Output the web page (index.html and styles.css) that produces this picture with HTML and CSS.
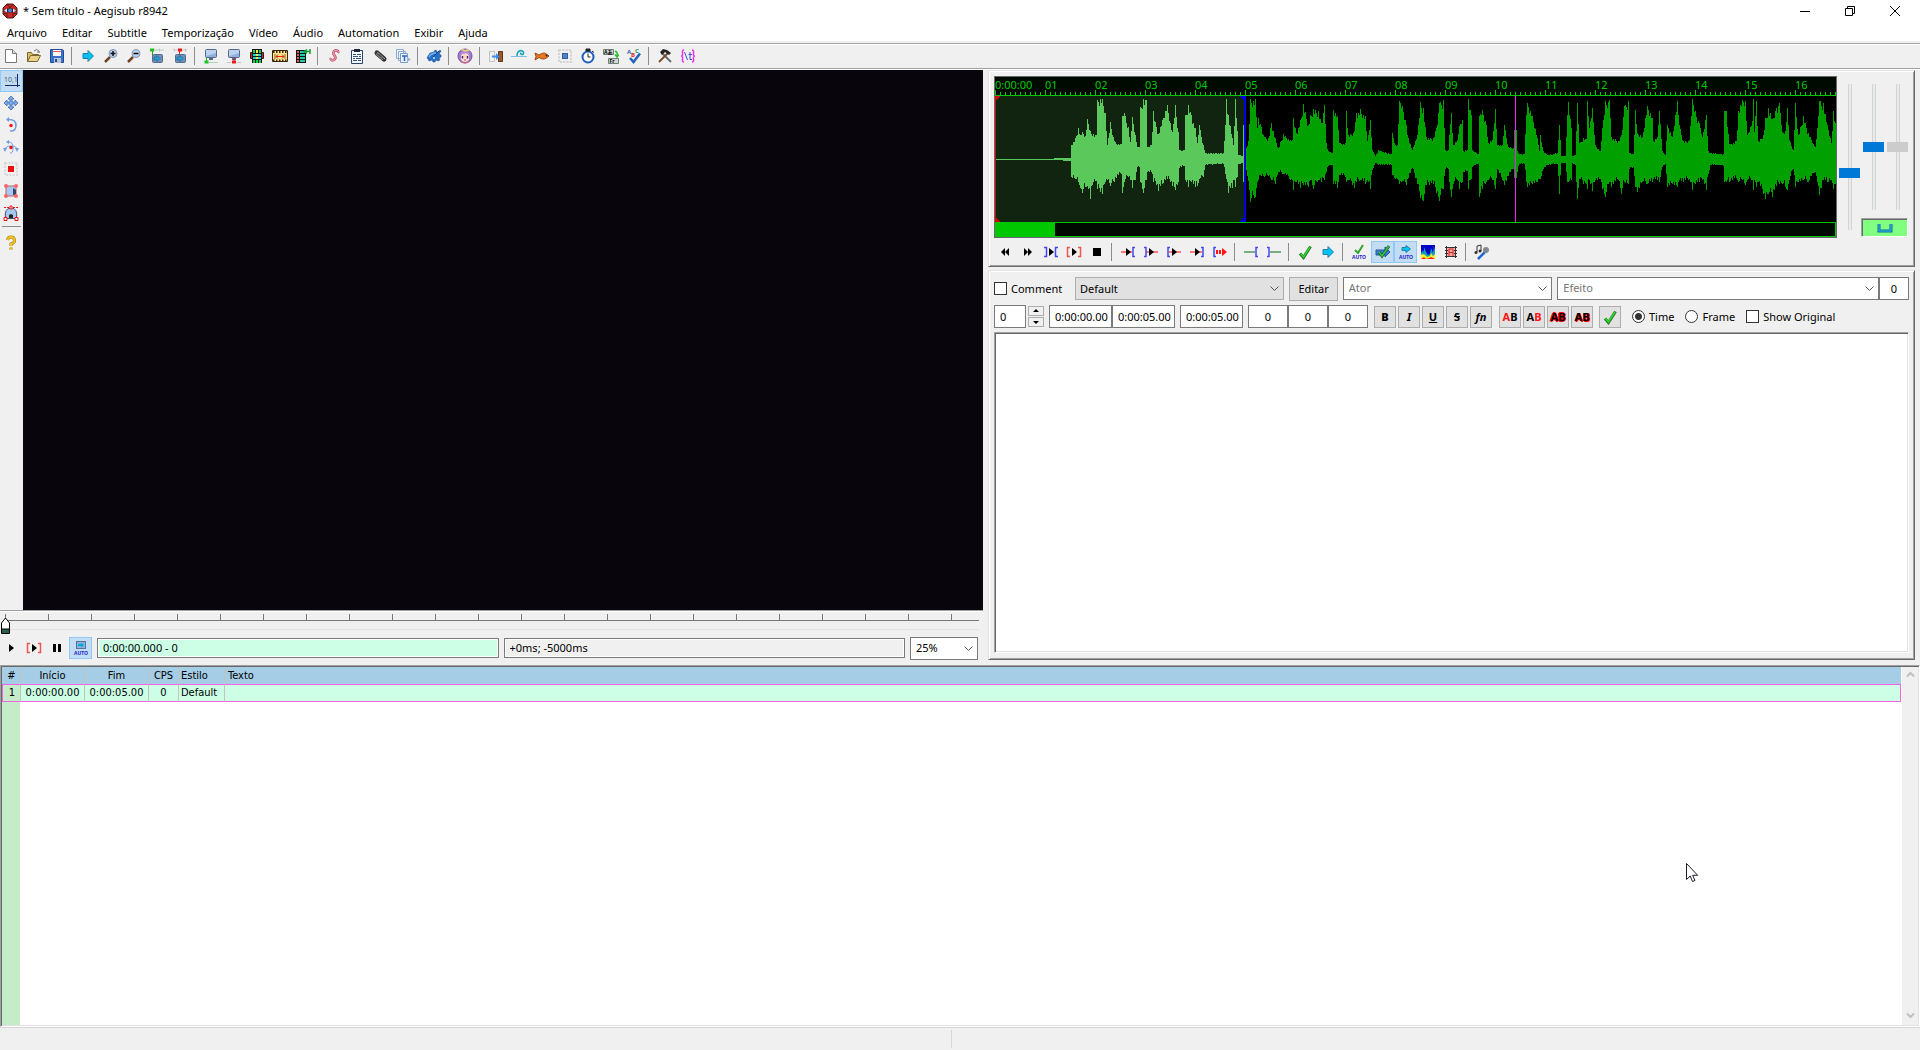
FILE: index.html
```html
<!DOCTYPE html>
<html lang="pt-BR">
<head>
    <meta charset="UTF-8">
    <title>* Sem título - Aegisub r8942</title>
    <link rel="stylesheet" href="styles.css">
</head>
<body>
    <!-- shapes that more than one button uses -->
    <svg class="defs" aria-hidden="true">
        <symbol id="arrow" viewBox="0 0 16 16"><path d="M3 5.500h5V2.500L13.500 8 8 13.500v-3H3z" fill="#00c3f5" stroke="#2b7fa5"/></symbol>
        <symbol id="check" viewBox="0 0 16 16"><path d="M3 9.500l3.500 4L13.500 2.500" fill="none" stroke="#1f7a1f" stroke-width="3"/><path d="M3.500 9.500l3 3.500L13 3" fill="none" stroke="#33d333" stroke-width="1.500"/></symbol>
        <symbol id="screen" viewBox="0 0 16 16"><rect x="2.500" y="1.500" width="11" height="8" rx="1" fill="#8fb1de" stroke="#56698a"/><path d="M3 2h10v3L3 8z" fill="#bdd2ee"/><path d="M6 10h4v2H6z" fill="#56698a"/></symbol>
        <symbol id="play" viewBox="0 0 16 16"><path d="M6 4l5 4-5 4z" fill="#000"/></symbol>
    </svg>

    <header class="titlebar">
        <svg class="logo" viewBox="0 0 16 16"><path d="M5 1h6l4 4v6l-4 4H5l-4-4V5z" fill="#c92a25" stroke="#4b1515"/><path d="M5 1l3 4 3-4M1 11l4-1v5M15 11l-4-1v5" fill="none" stroke="#641b1b"/><path d="M1 7.500Q8 3 15 7.500 8 12 1 7.500" fill="#20243d"/><path d="M2 7.500l3-2v4zM14 7.500l-3-2v4z" fill="#d9e4f2"/><circle cx="8" cy="7.500" r="2" fill="#5582c6"/></svg>
        <h1>* Sem título - Aegisub r8942</h1>
        <div class="window-buttons">
            <button type="button" aria-label="Minimizar"><svg viewBox="0 0 12 12"><path d="M1 6.500h10" stroke="#000"/></svg></button>
            <button type="button" aria-label="Restaurar"><svg viewBox="0 0 12 12"><path d="M1.500 3.500h7v7h-7zM3.500 3.500v-2h7v7h-2" fill="none" stroke="#000"/></svg></button>
            <button type="button" aria-label="Fechar"><svg viewBox="0 0 12 12"><path d="M1 1l10 10M11 1L1 11" stroke="#000"/></svg></button>
        </div>
    </header>

    <nav class="menubar">
        <a href="#">Arquivo</a>
        <a href="#">Editar</a>
        <a href="#">Subtitle</a>
        <a href="#">Temporização</a>
        <a href="#">Vídeo</a>
        <a href="#">Áudio</a>
        <a href="#">Automation</a>
        <a href="#">Exibir</a>
        <a href="#">Ajuda</a>
    </nav>

    <div class="toolbar main-toolbar">
        <button type="button" aria-label="Novo"><svg viewBox="0 0 16 16"><path d="M2.500 1.500h7l4 4v9h-11z" fill="#fff" stroke="#777"/><path d="M9.500 1.500v4h4" fill="#ddd" stroke="#777"/></svg></button>
        <button type="button" aria-label="Abrir"><svg viewBox="0 0 16 16"><path d="M1.500 14V4.500h4l1 2h6V9" fill="#d9bd68" stroke="#7d662b"/><path d="M1.500 13.500l3-6h10l-3 6z" fill="#ead18a" stroke="#7d662b"/><path d="M8 3q3-3 5 0v1.500M11 4h3" fill="none" stroke="#777"/></svg></button>
        <button type="button" aria-label="Salvar"><svg viewBox="0 0 16 16"><path d="M1.500 1.500h12l1 1v12h-13z" fill="#3872c9" stroke="#204a91"/><path d="M4 2h8v6H4z" fill="#fff"/><path d="M4 3.500h8" stroke="#e55"/><path d="M5 10h7v5H5z" fill="#bcc8da"/><path d="M6 11h2v3H6z" fill="#204a91"/></svg></button>
        <span class="sep"></span>
        <button type="button" aria-label="Ir para"><svg><use href="#arrow"/></svg></button>
        <button type="button" aria-label="Ampliar"><svg viewBox="0 0 16 16"><path d="M2 14l5-5" stroke="#714321" stroke-width="2.500"/><circle cx="10" cy="5.500" r="4" fill="#b9d2ef" stroke="#8397af"/><path d="M7.500 5.500h5M10 3v5" stroke="#111" stroke-width="1.500"/></svg></button>
        <button type="button" aria-label="Reduzir"><svg viewBox="0 0 16 16"><path d="M2 14l5-5" stroke="#714321" stroke-width="2.500"/><circle cx="10" cy="5.500" r="4" fill="#b9d2ef" stroke="#8397af"/><path d="M7.500 5.500h5" stroke="#111" stroke-width="1.500"/></svg></button>
        <button type="button" aria-label="Vídeo ao início"><svg viewBox="0 0 16 16"><path d="M3 2h12M5 .5v3M10.500 .5v3" stroke="#bcd1bc"/><path d="M1 .5h4v3H1z" fill="#20c420"/><path d="M3.500 3v5" stroke="#20a820"/><rect x="3.500" y="6.500" width="10" height="8" rx="1" fill="#6f8fb5" stroke="#526d90"/><path d="M5 9h3V7.500l3 3-3 3V12H5z" fill="#16a4dd" stroke="#254f7b" stroke-width=".5"/></svg></button>
        <button type="button" aria-label="Vídeo ao fim"><svg viewBox="0 0 16 16"><path d="M2 2h13M2 .5v3M13.500 .5v3" stroke="#d3bcbc"/><path d="M6 .5h4v3H6z" fill="#e21e1e"/><path d="M7.500 3v5" stroke="#d22"/><rect x="3.500" y="6.500" width="10" height="8" rx="1" fill="#6f8fb5" stroke="#526d90"/><path d="M5 9h3V7.500l3 3-3 3V12H5z" fill="#16a4dd" stroke="#254f7b" stroke-width=".5"/></svg></button>
        <span class="sep"></span>
        <button type="button" aria-label="Início ao vídeo"><svg viewBox="0 0 16 16"><use href="#screen"/><path d="M3.500 10v5" stroke="#20a820"/><path d="M1.500 12.500h4v3h-4z" fill="#20c420"/><path d="M6 14.500h9" stroke="#b4cfb4"/></svg></button>
        <button type="button" aria-label="Fim ao vídeo"><svg viewBox="0 0 16 16"><use href="#screen"/><path d="M8 9v5" stroke="#d22"/><path d="M6 12.500h4v3H6z" fill="#e21e1e"/><path d="M1 14.500h4M11 14.500h4" stroke="#d8bcbc"/></svg></button>
        <button type="button" aria-label="Selecionar visíveis"><svg viewBox="0 0 16 16"><path d="M1.500 4.500h13v6h-13z" fill="#a03535" stroke="#561010"/><path d="M3 1h10v14H3z" fill="#161616"/><path d="M4 2h2v3H4zM7 2h2v3H7zM10 2h2v3h-2zM4 12h2v3H4zM7 12h2v3H7zM10 12h2v3h-2z" fill="#19cf4e"/><path d="M4 6h8v2H4zM4 9h8v2H4z" fill="#1bdada"/><path d="M7 2h2v3H7zM7 6h2v2H7zM7 9h2v2H7z" fill="#ffe044"/></svg></button>
        <button type="button" aria-label="Ajustar à cena"><svg viewBox="0 0 16 16"><path d="M.5 2.500h15v11H.5z" fill="#ffe48e" stroke="#38270d"/><path d="M1 4h14M1 12.500h14" stroke="#38270d" stroke-width="2" stroke-dasharray="1.500 1.500"/><path d="M3 6v5M13 6v5" stroke="#8e641e"/><path d="M4 8.500h8M6 6.500l-2 2 2 2M10 6.500l2 2-2 2" fill="none" stroke="#df2a16"/></svg></button>
        <button type="button" aria-label="Deslocar"><svg viewBox="0 0 16 16"><path d="M1 2h10v13H1z" fill="#151515"/><path d="M2 3h2v2H2zM2 6h2v2H2zM2 9h2v2H2zM2 12h2v2H2z" fill="#e95353"/><path d="M5 3h5v2H5zM5 6h5v2H5zM5 9h5v2H5zM5 12h5v2H5z" fill="#19cdae"/><path d="M15 1v5M15 3.500h-5M12 1.500l-3 2 3 2" fill="none" stroke="#139c30" stroke-width="1.500"/></svg></button>
        <span class="sep"></span>
        <button type="button" aria-label="Gerenciador de estilos"><svg viewBox="0 0 16 16"><path d="M12 5q1-2.500-2-2.500T7.500 6c1 2 3 3 1.500 5s-5 1.500-4-1" fill="none" stroke="#a33d56" stroke-width="2.500"/><path d="M12 5q1-2.500-2-2.500T7.500 6c1 2 3 3 1.500 5s-5 1.500-4-1" fill="none" stroke="#f08fa6" stroke-width="1.500"/></svg></button>
        <button type="button" aria-label="Propriedades"><svg viewBox="0 0 16 16"><path d="M2.500 2.500h11v13h-11z" fill="#f4f8ff" stroke="#2c426c"/><path d="M5 1h6v3H5z" fill="#1f2635"/><path d="M4 6.500h3M8 6.500h4M4 8.500h5M10 8.500h2M4 10.500h2M7 10.500h5M4 12.500h4M9 12.500h3" stroke="#34517f"/></svg></button>
        <button type="button" aria-label="Anexos"><svg viewBox="0 0 16 16"><path d="M5 5l7 6" stroke="#333" stroke-width="5" stroke-linecap="round"/><path d="M5 4l8 7M4 6l7 6" stroke="#aaa"/><path d="M5 5l6 6" stroke="#666" stroke-dasharray="1 1" stroke-width="3"/></svg></button>
        <button type="button" aria-label="Fontes"><svg viewBox="0 0 16 16"><path d="M1.500 1.500h7v9h-7zM3.500 3.500h7v9h-7z" fill="#eaf3ff" stroke="#8fa9cb"/><path d="M5.500 5.500h7v9h-7z" fill="#eaf3ff" stroke="#7a9bc8"/><path d="M7 8h5M9.500 8v5" stroke="#2c65bd" stroke-width="1.500"/><path d="M12 9l4 2.500-4 2.500z" fill="#9ab3cf"/></svg></button>
        <span class="sep"></span>
        <button type="button" aria-label="Automação"><svg viewBox="0 0 16 16"><path d="M8 4l1-2 2 1v2l3-3 1 1-2 3 2 1v2l-2 1 1 2-2 1-2-1-1 2H7l-1-2-3 1-1-2-1-1 1-2 2-3z" fill="#2670c9" stroke="#163f7a" stroke-width=".5"/><path d="M3 9q2-4 7-4" stroke="#75b2f3" stroke-width="1.500" fill="none"/><path d="M7 9l6-6" stroke="#163f7a"/><circle cx="8" cy="10" r="1" fill="#cfe3fa"/></svg></button>
        <span class="sep"></span>
        <button type="button" aria-label="Assistente"><svg viewBox="0 0 16 16"><circle cx="8" cy="8" r="7" fill="#a67bd6" stroke="#74519f"/><path d="M4 7q4-4 8 0v5q-4 4-8 0z" fill="#fbdccb"/><path d="M4 8l2-4 1 3 2-4 3 5V5Q8 1 4 5z" fill="#b793e2"/><path d="M5.500 8v2.500M10.500 8v2.500" stroke="#4a2d6c" stroke-width="1.500"/><path d="M3 2l3-1 2 1 3-1 2 2-5 .5z" fill="#f0ce74"/><path d="M7 12h2" stroke="#c14a4a"/><path d="M4 14q4 2 8 0" stroke="#e06284" fill="none"/></svg></button>
        <span class="sep"></span>
        <button type="button" aria-label="Deslocar tempos"><svg viewBox="0 0 16 16"><path d="M1.500 3.500h5v10h-5z" fill="none" stroke="#999" stroke-dasharray="1 1"/><path d="M10.500 3.500h4v10h-4z" fill="#9a5a2c" stroke="#5f3417"/><path d="M4 7.500h4V5l3.500 3.500L8 12V9.500H4z" fill="#3d8df0"/></svg></button>
        <button type="button" aria-label="Pós-processador"><svg viewBox="0 0 16 16"><path d="M0 8.500h16" stroke="#7cc0e8" fill="none"/><path d="M6 8q0-5 4-5.500 4 1 2 4-3 .5-2-2" fill="none" stroke="#12a3b5" stroke-width="1.500"/></svg></button>
        <button type="button" aria-label="Kanji"><svg viewBox="0 0 16 16"><path d="M1 5l4 2q5-4 10 1-5 5-10 1.500L1 12l1-3.500z" fill="#e77a23" stroke="#97480f"/><path d="M8 6l2-2 2 2M8 10l2 2 1-2" fill="#d2601a"/><circle cx="12.500" cy="7.500" r="1" fill="#222"/></svg></button>
        <button type="button" aria-label="Resolução"><svg viewBox="0 0 16 16"><rect x="2" y="2" width="12" height="12" fill="none" stroke="#d2d2d2" stroke-width="2" stroke-dasharray="2 1.300"/><rect x="5.500" y="5.500" width="5" height="5" fill="#4e81d0" stroke="#305ca3"/></svg></button>
        <button type="button" aria-label="Karaoke"><svg viewBox="0 0 16 16"><circle cx="8" cy="9" r="5.500" fill="#fff" stroke="#1e60bb" stroke-width="2"/><path d="M6 1h4v2H6zM12 3l2 1.500" fill="#222" stroke="#222"/><path d="M8 5.500V9h2.500" fill="none" stroke="#222"/></svg></button>
        <button type="button" aria-label="Traduzir"><svg viewBox="0 0 16 16"><path d="M.5 1.500h10v5H.5zM5.500 10.500h10v5h-10z" fill="#cfd8d2" stroke="#708078"/><text x="1" y="6" class="tiny-dark">Aあ</text><text x="6.500" y="15" class="tiny-dark">Fr</text><path d="M12 3q3 1 2 5M12 6.500l2 2.500 2-2.500" fill="none" stroke="#2fbf2f" stroke-width="1.500"/></svg></button>
        <button type="button" aria-label="Ortografia"><svg viewBox="0 0 16 16"><text x="1" y="6" class="letter blue">A</text><text x="5" y="9" class="letter red">B</text><text x="9" y="5" class="letter green">C</text><path d="M4 10l3.500 4L14 5.500" fill="none" stroke="#2464bb" stroke-width="2.500"/></svg></button>
        <span class="sep"></span>
        <button type="button" aria-label="Opções"><svg viewBox="0 0 16 16"><path d="M5 5l9 9" stroke="#6b6b6b" stroke-width="2"/><path d="M2 14L12 4" stroke="#7c4c28" stroke-width="2"/><path d="M3 4l3-3 4 1 4 3-2 2-4-3-3 3z" fill="#252525"/></svg></button>
        <button type="button" aria-label="Tags"><svg viewBox="0 0 16 16"><path d="M4 2Q2 2 2.500 5T1 8q2 0 1.500 3T4 14M12 2q2 0 1.500 3T15 8q-2 0-1.500 3T12 14" fill="none" stroke="#f22ef2" stroke-width="1.500"/><path d="M4.500 4l3 8" stroke="#444ada"/><path d="M10 4v7.500h2M8.500 6.500H12" fill="none" stroke="#444ada"/></svg></button>
    </div>

    <div class="workspace">
        <section class="video-side">
            <div class="video-row">
                <div class="toolbar visual-toolbar">
                    <button type="button" class="active" aria-label="Padrão"><svg viewBox="0 0 16 16"><text x="0" y="9" class="coord">10,1</text><path d="M1 12.500h15M13.500 1v13" stroke="#132b6b"/></svg></button>
                    <button type="button" aria-label="Arrastar"><svg viewBox="0 0 16 16"><path d="M8 1l3 3H9v3h3V5l3 3-3 3V9H9v3h2l-3 3-3-3h2V9H4v2L1 8l3-3v2h3V4H5z" fill="#81aef0" stroke="#3c68b0" stroke-width=".8"/></svg></button>
                    <button type="button" aria-label="Girar Z"><svg viewBox="0 0 16 16"><path d="M6 2.500q7 0 7 6t-6 5.500" fill="none" stroke="#6f9be0" stroke-width="1.500"/><path d="M6 0v5L3 2.500z" fill="#6f9be0"/><circle cx="8" cy="8.500" r="1.700" fill="#e11"/></svg></button>
                    <button type="button" aria-label="Girar XY"><svg viewBox="0 0 16 16"><path d="M2 11q0-4 6-4t6 4M6 3q4 0 4 6t-3 5" fill="none" stroke="#6f9be0"/><path d="M6 1v4L3 3zM0 9h4l-2 4zM12 9h4l-2 4z" fill="#6f9be0"/><circle cx="8" cy="8.500" r="1.700" fill="#e11"/></svg></button>
                    <button type="button" aria-label="Escala"><svg viewBox="0 0 16 16"><rect x="2" y="2" width="12" height="12" fill="none" stroke="#d0d0d5" stroke-width="1.500" stroke-dasharray="2 1.300"/><path d="M5 5h6v6H5z" fill="#f00e0e"/></svg></button>
                    <button type="button" aria-label="Recorte"><svg viewBox="0 0 16 16"><path d="M3 3h10v10H3z" fill="#a8c8f3" stroke="#b56565"/><path d="M10 5l3 2v5h-3z" fill="#344667"/><g fill="#f66"><circle cx="3" cy="3" r="2"/><circle cx="13" cy="3" r="2"/><circle cx="3" cy="13" r="2"/><circle cx="13" cy="13" r="2"/></g></svg></button>
                    <button type="button" aria-label="Recorte vetorial"><svg viewBox="0 0 16 16"><path d="M2.500 13.500Q1 3 8 3t5.500 10.500z" fill="#a8c8f3" stroke="#46536c"/><path d="M1 2.500h14" stroke="#e11" stroke-dasharray="2 1"/><path d="M6 13v-3l2-1 2 1v3z" fill="#222"/><path d="M1 12.500h3v3H1zM12 12.500h3v3h-3zM7 1h2v3H7z" fill="#fff" stroke="#e11"/></svg></button>
                    <span class="sep"></span>
                    <button type="button" aria-label="Ajuda"><svg viewBox="0 0 16 16"><path d="M4.500 5Q5 2 8 2t3.500 3T8 9v2M8 12.500v2" fill="none" stroke="#9b7a18" stroke-width="3"/><path d="M4.500 5Q5 2 8 2t3.500 3T8 9v2M8 12.500v2" fill="none" stroke="#f6c51f" stroke-width="2"/></svg></button>
                </div>
                <div class="video"></div>
            </div>
            <div class="seek">
                <input type="range" class="seek-slider" min="0" max="100" value="0" aria-label="Posição do vídeo">
            </div>
            <div class="video-controls">
                <div class="toolbar">
                    <button type="button" aria-label="Reproduzir"><svg><use href="#play"/></svg></button>
                    <button type="button" aria-label="Reproduzir linha"><svg viewBox="0 0 16 16"><use href="#play"/><path d="M4 3.500H1.500v9H4M12 3.500h2.500v9H12" fill="none" stroke="#f45353" stroke-width="1.500"/></svg></button>
                    <button type="button" aria-label="Pausar"><svg viewBox="0 0 16 16"><path d="M4 4h3v8H4zM9 4h3v8H9z"/></svg></button>
                    <button type="button" class="active" aria-label="Rolagem automática"><svg viewBox="0 0 16 16"><rect x="3.500" y="1.500" width="9" height="7" fill="#8db1d9" stroke="#54749b"/><path d="M5 4h3V2.500L11 5 8 7.500V6H5z" fill="#00a9e0"/><text x="8" y="15" class="auto">AUTO</text></svg></button>
                </div>
                <input type="text" class="field position" value="0:00:00.000 - 0" readonly aria-label="Tempo do quadro">
                <input type="text" class="field offset" value="+0ms; -5000ms" readonly aria-label="Tempo relativo">
                <select class="zoom" aria-label="Zoom"><option>25%</option></select>
            </div>
        </section>

        <section class="edit-side">
            <div class="panel audio-panel">
                <div class="audio-row">
                    <div class="audio-display">
                        <div class="ruler">
                            <span>0:00:00</span><span>01</span><span>02</span><span>03</span><span>04</span><span>05</span><span>06</span><span>07</span><span>08</span><span>09</span><span>10</span><span>11</span><span>12</span><span>13</span><span>14</span><span>15</span><span>16</span>
                        </div>
                        <svg class="wave" shape-rendering="crispEdges">
                            <rect class="selection" width="250" height="126"/>
                            <path id="wave-selected" class="wave-selected"/>
                            <path id="wave-rest" class="wave-rest"/>
                            <path d="M0 0h5L1 4v118l4 4H0z" fill="#d80000"/>
                            <path d="M251 0h-7l5 5v116l-5 5h7z" fill="#0000e0"/>
                            <path d="M520 0h1v126h-1z" fill="#f020f0"/>
                        </svg>
                        <div class="audio-scroll"><div class="audio-scroll-thumb"></div></div>
                    </div>
                    <div class="audio-sliders">
                        <input type="range" class="vslider tall" value="38" aria-label="Zoom horizontal">
                        <div class="slider-group">
                            <div class="slider-pair">
                                <input type="range" class="vslider" value="50" aria-label="Zoom vertical">
                                <input type="range" class="vslider" value="50" disabled aria-label="Volume">
                            </div>
                            <button type="button" class="link-button" aria-label="Vincular"><svg viewBox="0 0 16 10"><path d="M2 1v7h12V1" fill="none" stroke="#1a66a0" stroke-width="3"/><path d="M2 1v7h12V1" fill="none" stroke="#16c8f0"/></svg></button>
                        </div>
                    </div>
                </div>
                <div class="toolbar audio-toolbar">
                    <button type="button" aria-label="Linha anterior"><svg viewBox="0 0 16 16"><path d="M8 4v8L4 8zM12 4v8L8 8z"/></svg></button>
                    <button type="button" aria-label="Próxima linha"><svg viewBox="0 0 16 16"><path d="M4 4v8l4-4zM8 4v8l4-4z"/></svg></button>
                    <button type="button" aria-label="Reproduzir seleção"><svg viewBox="0 0 16 16"><use href="#play"/><path d="M1 3.500h2.500v9H1M15 3.500h-2.500v9H15" fill="none" stroke="#4646f4" stroke-width="1.500"/></svg></button>
                    <button type="button" aria-label="Reproduzir linha"><svg viewBox="0 0 16 16"><use href="#play"/><path d="M4 3.500H1.500v9H4M12 3.500h2.500v9H12" fill="none" stroke="#f45353" stroke-width="1.500"/></svg></button>
                    <button type="button" aria-label="Parar"><svg viewBox="0 0 16 16"><path d="M4 4h8v8H4z"/></svg></button>
                    <span class="sep"></span>
                    <button type="button" aria-label="500 ms antes"><svg viewBox="0 0 16 16"><path d="M1 8h11" stroke="#f55" stroke-width="1.500"/><path d="M6 4l5 4-5 4z"/><path d="M15 3.500h-2v9h2" fill="none" stroke="#4646f4" stroke-width="1.500"/></svg></button>
                    <button type="button" aria-label="500 ms depois"><svg viewBox="0 0 16 16"><path d="M3 8h12" stroke="#f55" stroke-width="1.500"/><path d="M6 4l5 4-5 4z"/><path d="M1 3.500h2v9H1" fill="none" stroke="#4646f4" stroke-width="1.500"/></svg></button>
                    <button type="button" aria-label="Primeiros 500 ms"><svg viewBox="0 0 16 16"><path d="M3 8h12" stroke="#f55" stroke-width="1.500"/><path d="M6 4l5 4-5 4z"/><path d="M4 3.500H2v9h2" fill="none" stroke="#4646f4" stroke-width="1.500"/></svg></button>
                    <button type="button" aria-label="Últimos 500 ms"><svg viewBox="0 0 16 16"><path d="M1 8h12" stroke="#f55" stroke-width="1.500"/><path d="M6 4l5 4-5 4z"/><path d="M12 3.500h2v9h-2" fill="none" stroke="#4646f4" stroke-width="1.500"/></svg></button>
                    <button type="button" aria-label="Até o fim"><svg viewBox="0 0 16 16"><path d="M4 3.500H2v9h2" fill="none" stroke="#4646f4" stroke-width="1.500"/><path d="M4 8h8" stroke="#f11" stroke-width="4" stroke-dasharray="2 1"/><path d="M10 4l5 4-5 4z" fill="#f11"/></svg></button>
                    <span class="sep"></span>
                    <button type="button" aria-label="Entrada"><svg viewBox="0 0 16 16"><path d="M1 8h11" stroke="#4b9b5b" stroke-width="1.500"/><path d="M15 3.500h-2v9h2" fill="none" stroke="#4646f4" stroke-width="1.500"/></svg></button>
                    <button type="button" aria-label="Saída"><svg viewBox="0 0 16 16"><path d="M4 8h11" stroke="#4b9b5b" stroke-width="1.500"/><path d="M1 3.500h2v9H1" fill="none" stroke="#4646f4" stroke-width="1.500"/></svg></button>
                    <span class="sep"></span>
                    <button type="button" aria-label="Confirmar"><svg><use href="#check"/></svg></button>
                    <button type="button" aria-label="Ir à seleção"><svg><use href="#arrow"/></svg></button>
                    <span class="sep"></span>
                    <button type="button" aria-label="Confirmar automaticamente"><svg viewBox="0 0 16 16"><path d="M4 6l3 3 5-8" fill="none" stroke="#2fa52f" stroke-width="2"/><text x="8" y="15" class="auto">AUTO</text></svg></button>
                    <button type="button" class="active" aria-label="Avançar ao confirmar"><svg viewBox="0 0 16 16"><path d="M1 6h9V3l5 5-5 5v-2H1z" fill="#3b80d8" stroke="#25569a"/><path d="M4 8l3 4 7-10" fill="none" stroke="#155a25" stroke-width="3"/><path d="M4 8l3 4 7-10" fill="none" stroke="#36c84b" stroke-width="1.500"/></svg></button>
                    <button type="button" class="active" aria-label="Rolagem automática"><svg viewBox="0 0 16 16"><path d="M4 3.500h4v-2L12.500 5 8 8.500v-2H4z" fill="#00c3f5" stroke="#2b7fa5"/><text x="8" y="15" class="auto">AUTO</text></svg></button>
                    <button type="button" aria-label="Espectro"><svg viewBox="0 0 16 16"><path d="M1 1h14v14H1z" fill="#0000c8"/><path d="M1 15V9l2-3 1 3V3l2 5 2 3 2-1 1-6 2 5 1-7 1 5v8z" fill="#14a0b8"/><path d="M1 15v-4l2-1 2 1 2 2 3-1 1-3 2 3 2-2v5z" fill="#f2f21c"/><path d="M1 15l3-2 2 2 3-1 2-1 4 2z" fill="#f22"/></svg></button>
                    <button type="button" aria-label="Modo Medusa"><svg viewBox="0 0 16 16"><path d="M4 4h8v8H4z" fill="#f7a6a6"/><path d="M2 3.500h12M2 12.500h12M3.500 2v12M12.500 2v12M2 6.500h3M2 9.500h3M11 6.500h3M11 9.500h3" stroke="#333"/><path d="M6 12V5h4v7M6 8.500h4" fill="none" stroke="#d22"/></svg></button>
                    <span class="sep"></span>
                    <button type="button" aria-label="Karaoke"><svg viewBox="0 0 16 16"><path d="M3 8V2l4-1v6" fill="none" stroke="#333"/><circle cx="2" cy="8.500" r="1.500" fill="#333"/><circle cx="6" cy="7" r="1.500" fill="#333"/><path d="M4 15l7-7" stroke="#1d67d2" stroke-width="2.500"/><circle cx="12" cy="6" r="3" fill="#818892"/></svg></button>
                </div>
            </div>

            <form class="panel edit-panel">
                <div class="edit-row">
                    <label class="check comment"><input type="checkbox"> Comment</label>
                    <select class="style-select" aria-label="Estilo"><option>Default</option></select>
                    <button type="button" class="push">Editar</button>
                    <div class="combo actor">
                        <input type="text" placeholder="Ator" aria-label="Ator">
                        <button type="button" aria-label="Lista de atores"></button>
                    </div>
                    <div class="effect-group">
                        <div class="combo effect">
                            <input type="text" placeholder="Efeito" aria-label="Efeito">
                            <button type="button" aria-label="Lista de efeitos"></button>
                        </div>
                        <input type="text" class="field chars" value="0" aria-label="Caracteres">
                    </div>
                </div>
                <div class="edit-row times">
                    <div class="spin">
                        <input type="text" class="field layer" value="0" aria-label="Camada">
                        <div class="spin-buttons">
                            <button type="button" aria-label="Aumentar"><svg viewBox="0 0 6 4"><path d="M3 0l3 3H0z"/></svg></button>
                            <button type="button" aria-label="Diminuir"><svg viewBox="0 0 6 4"><path d="M3 4l3-3H0z"/></svg></button>
                        </div>
                    </div>
                    <div class="joined">
                        <input type="text" class="field time" value="0:00:00.00" aria-label="Início">
                        <input type="text" class="field time" value="0:00:05.00" aria-label="Fim">
                    </div>
                    <input type="text" class="field time" value="0:00:05.00" aria-label="Duração">
                    <div class="joined">
                        <input type="text" class="field margin" value="0" aria-label="Margem esquerda">
                        <input type="text" class="field margin" value="0" aria-label="Margem direita">
                        <input type="text" class="field margin" value="0" aria-label="Margem vertical">
                    </div>
                    <div class="format-buttons">
                        <button type="button" class="push"><b>B</b></button>
                        <button type="button" class="push"><i>I</i></button>
                        <button type="button" class="push"><u>U</u></button>
                        <button type="button" class="push"><s>S</s></button>
                        <button type="button" class="push"><i>fn</i></button>
                    </div>
                    <div class="format-buttons colors">
                        <button type="button" class="push"><em>A</em>B</button>
                        <button type="button" class="push">A<em>B</em></button>
                        <button type="button" class="push outline">AB</button>
                        <button type="button" class="push shadow">AB</button>
                    </div>
                    <div class="format-buttons">
                        <button type="button" class="push" aria-label="Confirmar"><svg><use href="#check"/></svg></button>
                    </div>
                    <label class="check"><input type="radio" name="unit" checked> Time</label>
                    <label class="check"><input type="radio" name="unit"> Frame</label>
                    <label class="check"><input type="checkbox"> Show Original</label>
                </div>
                <textarea class="line-text" aria-label="Texto da legenda"></textarea>
            </form>
        </section>
    </div>

    <section class="grid-panel">
        <div class="grid-body">
            <table class="subs">
                <thead>
                    <tr><th class="num">#</th><th class="start">Início</th><th class="end">Fim</th><th class="cps">CPS</th><th class="style">Estilo</th><th class="text">Texto</th></tr>
                </thead>
                <tbody>
                    <tr><td class="num">1</td><td>0:00:00.00</td><td>0:00:05.00</td><td>0</td><td class="style">Default</td><td class="text"></td></tr>
                </tbody>
            </table>
        </div>
        <div class="scrollbar">
            <button type="button" aria-label="Rolar para cima"><svg viewBox="0 0 9 9"><path d="M1 6.500L4.500 3 8 6.500" fill="none" stroke="#bfbfbf" stroke-width="2"/></svg></button>
            <button type="button" aria-label="Rolar para baixo"><svg viewBox="0 0 9 9"><path d="M1 2.500L4.500 6 8 2.500" fill="none" stroke="#bfbfbf" stroke-width="2"/></svg></button>
        </div>
    </section>

    <footer class="statusbar">
        <div class="status-main"></div>
        <div class="status-side"></div>
    </footer>

    <svg class="pointer" viewBox="0 0 13 20"><path d="M.5 .5v16l3.700-3.500 2.300 5.500 2.500-1-2.300-5.200h5z" fill="#fff" stroke="#1b1b2b"/></svg>

    <script src="wave.js"></script>
</body>
</html>
```
FILE: styles.css
```css
* {
    box-sizing: border-box;
}
body {
    margin: 0;
    min-height: 100vh;
    display: flex;
    flex-direction: column;
    background-color: #f0f0f0;
    color: #000000;
    font-family: "Noto Sans", "Open Sans", sans-serif;
    font-size: 11px;
    line-height: 16px;
}
button, input, select, textarea {
    font: inherit;
    color: inherit;
    margin: 0;
}
button {
    padding: 0;
    border: 0;
    background: none;
}
.defs {
    position: absolute;
    width: 0;
    height: 0;
}

/* title and menu */
.titlebar {
    display: flex;
    align-items: center;
    height: 24px;
    padding: 0 3px 2px 2px;
    background-color: #ffffff;
}
.logo {
    width: 16px;
    height: 16px;
}
.titlebar h1 {
    flex: 1;
    margin: 0 0 0 5px;
    font-size: 11px;
    font-weight: normal;
}
.window-buttons {
    display: flex;
}
.window-buttons button {
    display: flex;
    align-items: center;
    justify-content: center;
    width: 45px;
    height: 20px;
}
.window-buttons svg {
    width: 12px;
    height: 12px;
}
.menubar {
    display: flex;
    gap: 1px;
    height: 17px;
    padding-top: 1px;
    background-color: #ffffff;
}
.menubar a {
    padding: 0 7px;
    color: #000000;
    text-decoration: none;
}

/* toolbars */
.toolbar {
    display: flex;
}
.toolbar button {
    display: flex;
    align-items: center;
    justify-content: center;
    width: 23px;
    height: 22px;
    padding-right: 1px;
}
.toolbar svg {
    width: 16px;
    height: 16px;
}
.toolbar .active {
    padding-right: 0;
    background-color: #c2dcf3;
    border: 1px solid #90c8f6;
}
.sep {
    width: 8px;
    padding: 2px 0 2px 2px;
}
.sep::before {
    content: "";
    display: block;
    width: 1px;
    height: 18px;
    background-color: #8c8c8c;
}
.main-toolbar {
    margin-top: 2px;
    height: 27px;
    border-top: 1px solid #a0a0a0;
    border-bottom: 1px solid #ffffff;
    box-shadow: inset 0 1px #ffffff, inset 0 -1px #a0a0a0;
    padding-top: 1px;
}
.visual-toolbar {
    flex-direction: column;
    width: 23px;
}
.visual-toolbar .sep {
    width: 23px;
    height: 8px;
    padding: 2px;
}
.visual-toolbar .sep::before {
    width: 19px;
    height: 1px;
}
.auto {
    font: bold 5px "Open Sans", sans-serif;
    text-anchor: middle;
    fill: #2222cc;
}
.coord {
    font: 7px "Open Sans", sans-serif;
    fill: #46586f;
}
.tiny-dark {
    font: bold 5px "Open Sans", "Noto Sans CJK JP", sans-serif;
}
.letter {
    font: bold 6px "Open Sans", sans-serif;
}
.blue { fill: #2464bb; }
.red { fill: #dd2222; }
.green { fill: #209040; }

/* video side */
.workspace {
    display: grid;
    grid-template-columns: minmax(0, 984fr) minmax(0, 936fr);
    padding-bottom: 5px;
}
.video-side {
    display: flex;
    flex-direction: column;
    padding-right: 1px;
}
.video-row {
    display: flex;
}
.video {
    flex: 1;
    aspect-ratio: 16 / 9;
    background-color: #08060c;
}
.seek {
    height: 27px;
    padding: 3px 4px 0 0;
    border-top: 1px solid #a0a0a0;
    box-shadow: inset 0 1px #ffffff;
}
.seek-slider {
    appearance: none;
    display: block;
    width: 100%;
    height: 22px;
    background:
        repeating-linear-gradient(to right, #777777 0 1px, transparent 1px 43px) 5px 0 / calc(100% - 5px) 6px no-repeat,
        linear-gradient(#777777, #777777) 5px 6px / calc(100% - 5px) 1px no-repeat,
        linear-gradient(#e3e3e3, #e3e3e3) 5px 15px / calc(100% - 5px) 1px no-repeat;
}
.seek-slider::-webkit-slider-thumb {
    appearance: none;
    width: 11px;
    height: 18px;
    margin-top: 2px;
    background: url("data:image/svg+xml,%3Csvg xmlns='http://www.w3.org/2000/svg' viewBox='0 0 11 18'%3E%3Cpath d='M1.5 16.500V6L5.500 1l4 5v10.500z' fill='%23fff' stroke='%23000'/%3E%3Cpath d='M2 12h7v4H2z' fill='%23286050'/%3E%3Cpath d='M2 12h7' stroke='%23000'/%3E%3C/svg%3E") no-repeat;
}
.video-controls {
    display: flex;
    align-items: flex-start;
    gap: 5px;
    height: 23px;
    padding-right: 5px;
}
.field {
    min-width: 0;
    height: 23px;
    padding: 0 5px 1px;
    border: 1px solid #7a7a7a;
    border-radius: 0;
    background-color: #ffffff;
}
.position, .offset {
    flex: 1;
    height: 20px;
    margin-top: 1px;
    box-shadow: inset 0 0 0 1px #ffffff;
}
.position {
    background-color: #ccffe6;
}
.offset {
    background-color: #f0f0f0;
}
select {
    appearance: none;
    height: 23px;
    padding: 0 4px;
    border: 1px solid #7a7a7a;
    border-radius: 0;
    background: #ffffff url("data:image/svg+xml,%3Csvg xmlns='http://www.w3.org/2000/svg' width='9' height='6'%3E%3Cpath d='M.5.5l4 4 4-4' fill='none' stroke='%23555'/%3E%3C/svg%3E") right 4px center no-repeat;
}
.zoom {
    width: 68px;
    padding: 0 5px 2px;
}

/* panels on the right */
.edit-side {
    display: flex;
    flex-direction: column;
    gap: 3px;
    padding: 0 5px 0 4px;
}
.panel {
    padding: 5px;
    border: 1px solid;
    border-color: #e3e3e3 #696969 #696969 #e3e3e3;
    box-shadow: inset 1px 1px #ffffff, inset -1px -1px #a0a0a0;
}
.audio-row {
    display: flex;
}
.audio-display {
    flex: 1;
    min-width: 0;
    border: 1px solid #696969;
    background-color: #000000;
}
.ruler {
    display: flex;
    height: 19px;
    overflow: hidden;
    color: #00c800;
    background:
        repeating-linear-gradient(to right, #00c800 0 1px, transparent 1px 50px) 0 13px / 100% 5px no-repeat,
        repeating-linear-gradient(to right, #00c800 0 1px, transparent 1px 5px) 0 15px / 100% 3px no-repeat,
        #000a00;
    border-bottom: 1px solid #00c800;
}
.ruler span {
    flex: 0 0 50px;
    line-height: 15px;
}
.wave {
    display: block;
    width: 100%;
    height: 126px;
}
.selection { fill: #102410; }
.wave-selected { fill: #5ac85a; }
.wave-rest { fill: #00a000; }
.audio-scroll {
    height: 15px;
    border: 1px solid #00c800;
    background-color: #000a00;
}
.audio-scroll-thumb {
    width: 7%;
    height: 13px;
    background-color: #00c800;
}
.audio-sliders {
    display: flex;
    width: 72px;
    padding-bottom: 1px;
}
.slider-group {
    display: flex;
    flex-direction: column;
    justify-content: space-between;
}
.slider-pair {
    display: flex;
}
.vslider {
    appearance: none;
    writing-mode: vertical-lr;
    direction: rtl;
    width: 24px;
    height: 126px;
    margin-top: 8px;
    background: linear-gradient(to right, #d5d5d5 0 1px, #e7eaea 1px 3px, #d5d5d5 3px 4px) 11px 0 / 4px 100% no-repeat;
}
.vslider.tall {
    height: 146px;
}
.vslider::-webkit-slider-thumb {
    appearance: none;
    width: 21px;
    height: 10px;
    background-color: #0078d7;
}
.vslider:disabled::-webkit-slider-thumb {
    background-color: #cccccc;
}
.link-button {
    display: flex;
    align-items: center;
    justify-content: center;
    width: 47px;
    height: 19px;
    border: 1px solid;
    border-color: #a0a0a0 #ffffff #ffffff #a0a0a0;
    box-shadow: inset 1px 1px #696969;
    background-color: #80ff80;
}
.link-button svg {
    width: 16px;
    height: 10px;
}
.audio-toolbar {
    padding-top: 3px;
    height: 23px;
}

/* line editor */
.edit-panel {
    flex: 1;
    display: flex;
    flex-direction: column;
    gap: 5px;
    padding-top: 6px;
}
.edit-row {
    display: flex;
    align-items: center;
    gap: 5px;
    height: 23px;
}
.check {
    display: flex;
    align-items: center;
    gap: 4px;
    white-space: nowrap;
}
.check input {
    appearance: none;
    width: 13px;
    height: 13px;
    border: 1px solid #333333;
    background-color: #ffffff;
}
.check input[type="radio"] {
    border-radius: 50%;
}
.check input[type="radio"]:checked {
    background: radial-gradient(circle, #333333 3px, #ffffff 4px);
}
.comment {
    width: 76px;
}
.style-select {
    flex: 199 1 0;
    border-color: #adadad;
    background-color: #e1e1e1;
}
.push {
    display: flex;
    align-items: center;
    justify-content: center;
    height: 24px;
    border: 1px solid #adadad;
    background-color: #e1e1e1;
    padding: 0 8px;
}
.combo {
    display: flex;
    height: 23px;
    border: 1px solid #7a7a7a;
    background-color: #ffffff;
}
.combo input {
    flex: 1;
    min-width: 0;
    padding: 0 5px 2px;
    border: 0;
    background: none;
}
.combo input::placeholder {
    color: #757575;
}
.combo button {
    width: 17px;
    background: url("data:image/svg+xml,%3Csvg xmlns='http://www.w3.org/2000/svg' width='9' height='6'%3E%3Cpath d='M.5.5l4 4 4-4' fill='none' stroke='%23555'/%3E%3C/svg%3E") center no-repeat;
}
.actor {
    flex: 207 1 0;
}
.effect-group {
    display: flex;
    flex: 351 1 0;
}
.effect {
    flex: 1;
}
.chars {
    width: 30px;
    text-align: center;
}
.spin {
    display: flex;
    gap: 2px;
}
.layer {
    width: 32px;
}
.spin-buttons {
    display: flex;
    flex-direction: column;
    justify-content: center;
    gap: 1px;
}
.spin-buttons button {
    display: flex;
    align-items: center;
    justify-content: center;
    width: 16px;
    height: 10px;
    border: 1px solid #adadad;
}
.spin-buttons svg {
    width: 6px;
    height: 4px;
}
.joined {
    display: flex;
}
.time {
    width: 63px;
    padding: 0 0 1px 5px;
}
.margin {
    width: 40px;
    text-align: center;
}
.format-buttons {
    display: flex;
    gap: 2px;
    margin-left: 1px;
}
.format-buttons.colors {
    margin-left: 2px;
}
.format-buttons .push {
    width: 22px;
    height: 22px;
    padding: 0;
    font-weight: bold;
}
.format-buttons svg {
    width: 16px;
    height: 16px;
}
.colors em {
    color: #ff1111;
    font-style: normal;
}
.outline {
    text-shadow: -1px 0 #ff0000, 1px 0 #ff0000, 0 1px #ff0000, 0 -1px #ff0000;
}
.shadow {
    text-shadow: 1px 1px #ff0000, 1px 0 #ff0000;
}
.times .check {
    margin-left: 6px;
}
.line-text {
    flex: 1;
    display: block;
    width: 100%;
    margin: -1px 0 1px;
    resize: none;
    border: 1px solid;
    border-color: #a0a0a0 #ffffff #ffffff #a0a0a0;
    border-radius: 0;
    box-shadow: inset 1px 1px #696969, inset -1px -1px #e3e3e3;
    background-color: #ffffff;
}

/* subtitle grid */
.grid-panel {
    flex: 1;
    display: flex;
    border: 1px solid;
    border-color: #a0a0a0 #ffffff #ffffff #a0a0a0;
    box-shadow: inset 1px 1px #696969, inset -1px -1px #e3e3e3;
    padding: 1px;
    font-family: "DejaVu Sans Condensed", "DejaVu Sans", sans-serif;
}
.grid-body {
    flex: 1;
    background: linear-gradient(#c4ecc9, #c4ecc9) 0 0 / 18px 100% no-repeat, #ffffff;
}
.subs {
    width: 100%;
    border-collapse: separate;
    border-spacing: 0;
    table-layout: fixed;
}
.subs th {
    height: 17px;
    padding: 1px 0 0;
    background-color: #a5cde6;
    font-weight: normal;
    border-right: 1px solid #c2c2c2;
}
.subs td {
    height: 18px;
    padding: 0;
    line-height: 16px;
    text-align: center;
    background-color: #ccffe6;
    border: solid #f562e4;
    border-width: 1px 0;
    border-right: 1px solid #c2c2c2;
}
.subs .num {
    width: 19px;
    padding-left: 1px;
}
.subs .start, .subs .end { width: 64px; }
.subs .cps { width: 30px; }
.subs .style {
    width: 46px;
    padding-left: 2px;
    text-align: left;
}
.subs .text {
    padding-left: 3px;
    text-align: left;
    border-right: 0;
}
.subs td.num {
    background-color: #c4ecc9;
    border-left: 1px solid #f562e4;
}
.subs td.text {
    border-right: 1px solid #f562e4;
}
.scrollbar {
    display: flex;
    flex-direction: column;
    justify-content: space-between;
    width: 17px;
    background-color: #f0f0f0;
    border-left: 1px solid #ffffff;
}
.scrollbar button {
    height: 17px;
}
.scrollbar svg {
    width: 9px;
    height: 9px;
}

/* status bar */
.statusbar {
    display: flex;
    height: 23px;
    border-top: 1px solid #d7d7d7;
}
.status-main {
    flex: 951;
    margin: 2px 0;
    border-right: 1px solid #d7d7d7;
}
.status-side {
    flex: 969;
}
.pointer {
    position: absolute;
    left: 1686px;
    top: 863px;
    width: 13px;
    height: 20px;
}
```
FILE: wave.js
```js
// envelope of the audio: x, peak above the middle, peak below it
const peaks = [
    [0,0,0],[58,0,0],[60,1,0],[75,1,1],[76,14,17],[80,21,19],[83,31,22],[85,24,28],[87,27,33],[90,23,27],[92,40,26],[95,28,39],[98,25,22],[101,24,21],
    [102,59,29],[107,60,34],[110,46,22],[112,14,20],[115,37,26],[119,18,22],[123,15,15],[126,15,14],[127,43,33],[129,46,22],[133,32,17],[135,17,20],[137,42,28],[140,24,20],
    [142,12,7],[144,12,7],[145,52,22],[148,60,33],[151,59,20],[152,12,12],[156,14,12],[158,48,22],[161,32,25],[163,25,31],[167,39,24],[172,54,19],[175,36,22],[177,27,26],
    [180,54,30],[183,27,22],[184,9,8],[189,9,6],[190,44,20],[193,54,27],[196,44,22],[200,31,27],[202,16,26],[204,34,19],[208,14,17],[210,6,5],[228,6,4],[230,34,14],
    [231,60,19],[233,44,33],[237,21,28],[238,14,20],[240,60,27],[242,28,17],[243,4,4],[247,3,3],[248,34,22],[250,36,22],[251,11,10],[253,18,21],[255,60,42],[260,60,37],
    [262,31,22],[263,41,20],[266,32,16],[269,22,17],[273,21,16],[276,36,20],[280,21,24],[283,11,12],[288,25,14],[295,19,20],[297,19,20],[298,41,30],[301,26,22],[305,39,28],
    [308,55,25],[313,34,27],[315,44,20],[318,50,29],[323,48,20],[326,36,22],[329,54,20],[331,16,12],[333,8,6],[337,6,5],[338,49,24],[342,43,28],[344,16,15],[350,16,17],
    [351,48,22],[353,24,20],[359,28,28],[361,46,22],[365,50,20],[370,43,24],[372,18,20],[375,39,29],[377,9,10],[380,3,3],[383,9,5],[396,5,5],[397,26,15],[400,14,19],
    [402,14,19],[404,58,24],[407,53,21],[411,34,25],[413,21,18],[417,9,8],[422,24,24],[425,57,38],[428,51,41],[431,22,25],[438,21,24],[441,31,33],[444,56,41],[448,59,29],
    [450,9,9],[453,9,9],[454,24,22],[456,46,37],[458,14,24],[462,19,20],[464,33,29],[467,39,22],[468,8,12],[472,9,11],[473,60,29],[476,44,19],[477,9,7],[483,5,4],
    [484,43,37],[487,49,29],[491,34,22],[493,16,20],[497,19,20],[500,50,29],[502,14,9],[507,14,20],[509,34,25],[513,12,16],[518,11,9],[520,54,32],[522,8,12],[524,5,4],
    [529,5,4],[531,44,22],[532,56,27],[537,43,24],[542,21,22],[544,8,19],[545,24,19],[548,8,9],[552,4,5],[562,6,4],[564,34,34],[566,3,3],[570,3,3],[572,44,22],
    [573,57,22],[576,31,20],[577,3,3],[580,4,5],[582,56,39],[584,16,19],[588,21,24],[591,20,24],[592,58,29],[594,31,20],[597,51,31],[600,14,20],[605,8,19],[607,31,29],
    [610,58,37],[614,59,22],[616,22,27],[623,18,20],[626,24,34],[629,53,22],[633,58,24],[634,6,9],[638,5,7],[640,49,27],[642,26,32],[647,22,22],[652,53,24],[657,41,22],
    [658,18,19],[662,22,20],[664,48,22],[667,8,7],[670,4,4],[672,34,27],[677,22,24],[682,58,27],[684,34,20],[688,18,22],[694,19,19],[697,60,30],[700,48,24],[704,36,22],
    [707,22,20],[711,44,30],[713,8,14],[715,6,5],[728,5,6],[729,48,22],[731,48,22],[734,15,22],[741,18,18],[743,48,22],[747,59,20],[750,58,25],[752,24,20],[757,38,20],
    [758,60,30],[759,27,20],[761,58,27],[763,18,22],[768,24,34],[770,41,39],[773,51,34],[777,40,37],[781,51,26],[784,56,24],[787,27,24],[790,28,27],[792,51,30],[794,19,20],
    [798,9,9],[800,56,27],[803,24,22],[808,43,20],[813,26,22],[820,12,12],[822,31,22],[824,58,35],[828,56,20],[832,34,22],[836,16,20],[838,48,29],[841,30,22]
];

const middle = 63;

// one bar per pixel, a little ragged between the peaks
function bars(from, to) {
    let d = '';
    let i = 0;
    for (let x = from; x < to; x++) {
        while (i < peaks.length - 2 && peaks[i + 1][0] <= x) i++;
        const [x0, up0, down0] = peaks[i];
        const [x1, up1, down1] = peaks[i + 1];
        const t = (x - x0) / (x1 - x0);
        let up = up0 + (up1 - up0) * t;
        let down = down0 + (down1 - down0) * t;
        if (up > 4 && x !== x0) {
            up -= (x * 7 % 5) * up / 30;
            down -= (x * 11 % 7) * down / 28;
        }
        up = Math.round(up);
        down = Math.round(down);
        d += `M${x} ${middle - up}h1v${up + down + 1}h-1z`;
    }
    return d;
}

document.getElementById('wave-selected').setAttribute('d', bars(0, 250));
document.getElementById('wave-rest').setAttribute('d', bars(250, 841));
```
